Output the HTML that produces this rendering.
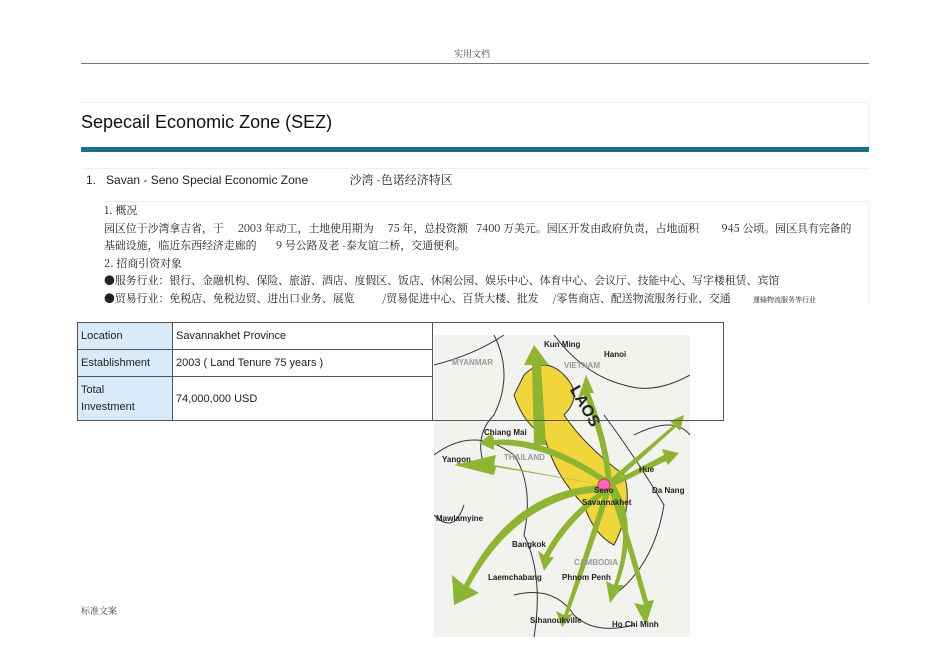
<!DOCTYPE html>
<html><head><meta charset="utf-8"><style>
body{margin:0;width:950px;height:672px;background:#fff;position:relative;overflow:hidden;font-family:"Liberation Sans","Noto Sans CJK SC",sans-serif;color:#222}
.a{position:absolute;white-space:nowrap}
.cn{font-family:"Noto Serif CJK SC","Liberation Serif",serif}
td{border:1px solid #555;font-size:11px;padding:0 0 0 3px;vertical-align:middle}
</style></head><body>
<div class="a cn" style="left:454px;top:47px;font-size:9px;color:#444">实用文档</div>
<div style="position:absolute;left:81px;top:63px;width:788px;height:1px;background:#777"></div>
<div style="position:absolute;left:81px;top:102px;width:787px;height:44px;border:1px solid #eee;border-left:none"></div>
<div class="a" style="left:81px;top:112px;font-size:18px;color:#111">Sepecail Economic Zone (SEZ)</div>
<div style="position:absolute;left:81px;top:147px;width:788px;height:5px;background:#1b6f8c"></div>
<div style="position:absolute;left:83px;top:168px;width:786px;height:1px;background:#eee"></div>
<div class="a" style="left:86px;top:171px;font-size:12px">1.&nbsp;&nbsp; Savan - Seno Special Economic Zone <span class="cn" style="margin-left:38px">沙湾 -色诺经济特区</span></div>
<div style="position:absolute;left:103px;top:201px;width:766px;height:1px;background:#eee"></div>
<div class="a cn" style="left:104px;top:202px;font-size:10.9px;line-height:17.6px">1. 概况<br>园区位于沙湾拿吉省，于&nbsp;&nbsp;&nbsp;&nbsp; 2003 年动工，土地使用期为&nbsp;&nbsp;&nbsp;&nbsp; 75 年，总投资额&nbsp;&nbsp; 7400 万美元。园区开发由政府负责，占地面积&nbsp;&nbsp;&nbsp;&nbsp;&nbsp;&nbsp;&nbsp; 945 公顷。园区具有完备的<br>基础设施，临近东西经济走廊的&nbsp;&nbsp;&nbsp;&nbsp;&nbsp;&nbsp; 9 号公路及老 -泰友谊二桥，交通便利。<br>2. 招商引资对象<br>●服务行业：银行、金融机构、保险、旅游、酒店、度假区、饭店、休闲公园、娱乐中心、体育中心、会议厅、技能中心、写字楼租赁、宾馆<br>●贸易行业：免税店、免税边贸、进出口业务、展览&nbsp;&nbsp;&nbsp;&nbsp;&nbsp;&nbsp;&nbsp;&nbsp;&nbsp; /贸易促进中心、百货大楼、批发&nbsp;&nbsp;&nbsp;&nbsp; /零售商店、配送物流服务行业、交通&nbsp;&nbsp;&nbsp;&nbsp;&nbsp;&nbsp;&nbsp; <span style="font-size:7px">運输物流服务等行业</span></div>
<div style="position:absolute;left:868px;top:201px;width:1px;height:104px;background:#eee"></div>
<svg style="position:absolute;left:434px;top:335px" width="256" height="302" viewBox="0 0 256 302">
<rect width="256" height="302" fill="#f2f2ef"/>
<g fill="none" stroke="#333" stroke-width="1">
<path d="M0 30 Q40 20 70 0"/><path d="M120 0 Q150 40 190 50 Q220 60 256 40"/><path d="M0 120 Q40 90 80 120 Q100 150 90 200 Q110 240 100 302"/><path d="M170 80 Q200 120 230 170 Q220 230 180 260"/><path d="M0 180 Q20 200 30 170"/>
<path d="M60 0 Q80 40 60 80 Q40 100 50 130"/><path d="M200 100 Q240 80 256 100"/><path d="M80 260 Q120 250 140 280 Q160 300 200 290"/>
</g>
<path d="M90 40 Q110 20 130 40 Q150 60 130 80 Q150 110 190 140 Q200 170 180 210 Q160 200 150 170 Q120 140 110 100 Q90 90 80 60 Z" fill="#f0d63a" stroke="#333"/>
<g fill="#8db531">
<path d="M100 10 L115 30 L107 30 L112 110 L100 110 L98 30 L90 30Z"/>
<path d="M170 150 L60 130 L62 120 L20 130 L60 140 L62 132Z"/>
<path d="M175 145 Q110 100 60 105 L58 98 L45 108 L60 115 L60 110 Q110 108 172 150Z"/>
<path d="M175 150 Q80 150 30 250 L18 240 L20 270 L45 258 L35 252 Q85 160 175 156Z"/>
<path d="M175 155 Q190 200 210 270 L200 268 L212 290 L220 265 L214 266 Q196 200 180 155Z"/>
<path d="M170 158 Q150 220 130 280 L122 276 L128 292 L140 278 L134 280 Q156 220 176 158Z"/>
<path d="M175 145 L240 90 L236 86 L250 80 L246 96 L242 92 L178 150Z"/>
<path d="M175 150 Q130 180 110 220 L104 216 L110 236 L120 222 L115 222 Q136 184 178 154Z"/>
<path d="M172 150 Q170 110 150 60 L144 64 L152 40 L160 58 L156 58 Q176 110 178 150Z"/>
<path d="M176 150 Q200 190 180 250 L172 246 L176 268 L190 250 L184 250 Q206 190 180 148Z"/>
<path d="M176 148 L230 120 L228 114 L245 118 L234 130 L232 126 L178 152Z"/>
</g>
<circle cx="170" cy="150" r="6" fill="#f6c" stroke="#c33"/>
<g font-family="Liberation Sans,sans-serif" font-weight="bold" font-size="8" fill="#222">
<text x="110" y="12">Kun Ming</text><text x="170" y="22">Hanoi</text><text x="18" y="30" fill="#999">MYANMAR</text><text x="130" y="33" fill="#999">VIETNAM</text>
<text x="50" y="100">Chiang Mai</text><text x="8" y="127">Yangon</text><text x="70" y="125" fill="#999">THAILAND</text><text x="205" y="137">Hue</text><text x="218" y="158">Da Nang</text>
<text x="160" y="158">Seno</text><text x="148" y="170">Savannakhet</text><text x="2" y="186">Mawlamyine</text><text x="78" y="212">Bangkok</text><text x="140" y="230" fill="#999">CAMBODIA</text>
<text x="54" y="245">Laemchabang</text><text x="128" y="245">Phnom Penh</text><text x="96" y="288">Sihanoukville</text><text x="178" y="292">Ho Chi Minh</text>
<text x="115" y="60" font-size="16" transform="rotate(60 130 75)">LAOS</text>
</g>
</svg>
<table style="position:absolute;left:77px;top:322px;border-collapse:collapse;width:647px;height:99px">
<tr style="height:27px"><td style="width:91px;background:#d9eaf8">Location</td><td style="width:256px;background:#fff">Savannakhet Province</td><td rowspan="3" style="border-right:1px solid #555"></td></tr>
<tr style="height:27px"><td style="background:#d9eaf8">Establishment</td><td style="background:#fff">2003 ( Land Tenure 75 years )</td></tr>
<tr><td style="background:#d9eaf8;line-height:17px">Total<br>Investment</td><td style="background:#fff">74,000,000 USD</td></tr>
</table>
<div class="a cn" style="left:81px;top:604px;font-size:9px;color:#444">标准文案</div>
</body></html>
